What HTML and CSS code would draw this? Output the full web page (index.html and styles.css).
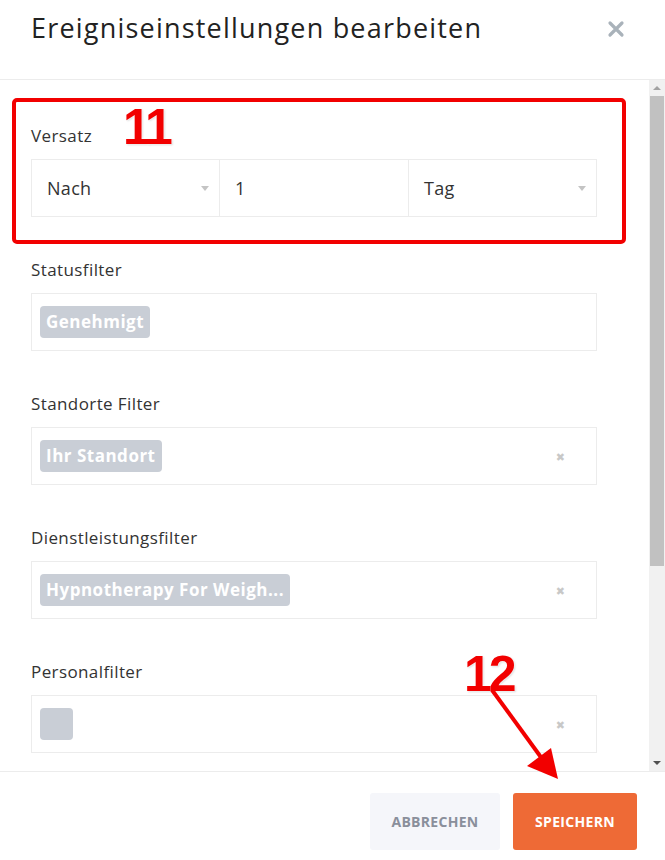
FILE: index.html
```html
<!DOCTYPE html>
<html lang="de">
<head>
    <meta charset="utf-8">
    <title>Ereigniseinstellungen bearbeiten</title>
    <link rel="stylesheet" href="styles.css">
</head>
<body>
    <div class="modal">
        <div class="modal-head">
            <h1 class="modal-title">Ereigniseinstellungen bearbeiten</h1>
            <button class="close-btn" aria-label="Schließen">
                <svg width="18" height="18" viewBox="0 0 18 18"><path d="M3 3 L15 15 M15 3 L3 15" stroke="#a9b2ba" stroke-width="3.2" stroke-linecap="round"/></svg>
            </button>
        </div>

        <div class="modal-main">
            <div class="modal-body">
                <div class="field">
                    <label class="field-label">Versatz</label>
                    <div class="offset-group">
                        <div class="cell cell-select">Nach<span class="caret"></span></div>
                        <div class="cell">1</div>
                        <div class="cell cell-select">Tag<span class="caret"></span></div>
                    </div>
                </div>

                <div class="field">
                    <label class="field-label">Statusfilter</label>
                    <div class="multi">
                        <span class="tag">Genehmigt</span>
                    </div>
                </div>

                <div class="field">
                    <label class="field-label">Standorte Filter</label>
                    <div class="multi">
                        <span class="tag">Ihr Standort</span>
                        <span class="clear">&#10006;</span>
                    </div>
                </div>

                <div class="field">
                    <label class="field-label">Dienstleistungsfilter</label>
                    <div class="multi">
                        <span class="tag">Hypnotherapy For Weigh...</span>
                        <span class="clear">&#10006;</span>
                    </div>
                </div>

                <div class="field">
                    <label class="field-label">Personalfilter</label>
                    <div class="multi">
                        <span class="tag tag-empty"></span>
                        <span class="clear">&#10006;</span>
                    </div>
                </div>
            </div>

            <div class="scrollbar">
                <div class="sb-btn"><span class="sb-up"></span></div>
                <div class="sb-track"><div class="sb-thumb"></div></div>
                <div class="sb-btn"><span class="sb-down"></span></div>
            </div>
        </div>

        <div class="modal-foot">
            <button class="btn btn-cancel">Abbrechen</button>
            <button class="btn btn-save">Speichern</button>
        </div>

        <!-- screenshot annotations -->
        <div class="mark-box"></div>
        <div class="mark-num num-11">11</div>
        <div class="mark-num num-12">12</div>
        <svg class="mark-arrow" width="665" height="860" viewBox="0 0 665 860">
            <line x1="492" y1="690" x2="543" y2="760" stroke="#f20000" stroke-width="4"/>
            <polygon points="527,766 551,748 558,779" fill="#f20000"/>
        </svg>
    </div>
</body>
</html>
```

FILE: styles.css
```css
body {
    margin: 0;
    background: #fff;
    font-family: "Open Sans", "DejaVu Sans", sans-serif;
    color: #333;
}
.modal {
    position: relative;
    height: 860px;
    display: flex;
    flex-direction: column;
    overflow: hidden;
}
.modal-head {
    height: 80px;
    flex: none;
    display: flex;
    align-items: flex-start;
    justify-content: space-between;
    padding: 10px 40px 0 31px;
    box-sizing: border-box;
    border-bottom: 1px solid #ececec;
}
.modal-title {
    margin: 0;
    font-size: 27px;
    line-height: 36px;
    font-weight: 400;
    letter-spacing: 1.2px;
    color: #222;
}
.close-btn {
    border: none;
    background: none;
    padding: 0;
    margin-top: 10px;
    cursor: pointer;
}

.modal-main {
    flex: 1;
    display: flex;
    min-height: 0;
}
.modal-body {
    flex: 1;
    overflow: hidden;
    padding: 45px 52px 0 31px;
}

/* fake classic scrollbar (thumb near top) */
.scrollbar {
    width: 16px;
    flex: none;
    display: flex;
    flex-direction: column;
    background: #f1f1f1;
}
.sb-btn {
    height: 16px;
    display: flex;
    align-items: center;
    justify-content: center;
}
.sb-up {
    border-left: 4px solid transparent;
    border-right: 4px solid transparent;
    border-bottom: 4px solid #a3a3a3;
}
.sb-down {
    border-left: 4px solid transparent;
    border-right: 4px solid transparent;
    border-top: 4px solid #505050;
}
.sb-track {
    flex: 1;
}
.sb-thumb {
    height: 470px;
    margin: 0 1px;
    background: #c1c1c1;
}

.field {
    margin-bottom: 42px;
}
.field-label {
    display: block;
    font-size: 17px;
    line-height: 22px;
    letter-spacing: 0.4px;
    margin-bottom: 12px;
    color: #333;
}
.offset-group {
    display: grid;
    grid-template-columns: 187px 189px 1fr;
    height: 58px;
    border: 1px solid #ececec;
    box-sizing: border-box;
}
.cell {
    display: flex;
    align-items: center;
    padding-left: 15px;
    font-size: 18px;
    letter-spacing: 0.3px;
    color: #333;
    border-left: 1px solid #ececec;
    position: relative;
}
.cell:first-child {
    border-left: none;
}
.caret {
    position: absolute;
    right: 10px;
    top: 26px;
    border-left: 4px solid transparent;
    border-right: 4px solid transparent;
    border-top: 5px solid #c4c4c4;
}
.multi {
    height: 58px;
    border: 1px solid #ececec;
    box-sizing: border-box;
    display: flex;
    align-items: center;
    padding: 0 31px 0 8px;
}
.tag {
    background: #c9ced6;
    color: #fff;
    font-weight: 700;
    font-size: 17px;
    line-height: 32px;
    height: 32px;
    letter-spacing: 0.5px;
    padding: 0 6px;
    border-radius: 4px;
}
.tag-empty {
    width: 33px;
    padding: 0;
}
.clear {
    margin-left: auto;
    color: #c8c8c8;
    font-size: 11px;
}

.modal-foot {
    height: 89px;
    flex: none;
    border-top: 1px solid #ececec;
    display: flex;
    justify-content: flex-end;
    align-items: flex-start;
    gap: 13px;
    padding: 21px 28px 0 0;
    box-sizing: border-box;
}
.btn {
    height: 57px;
    border: none;
    border-radius: 3px;
    font-family: "Open Sans", sans-serif;
    font-weight: 700;
    font-size: 14px;
    letter-spacing: 0.3px;
    text-transform: uppercase;
    cursor: pointer;
}
.btn-cancel {
    width: 130px;
    background: #f5f6fa;
    color: #8a8f9b;
}
.btn-save {
    width: 124px;
    background: #ee6a36;
    color: #fff;
}

/* annotations drawn on top */
.mark-box {
    position: absolute;
    left: 12px;
    top: 98px;
    width: 614px;
    height: 146px;
    box-sizing: border-box;
    border: 4px solid #f20000;
    border-radius: 5px;
}
.mark-num {
    position: absolute;
    font-family: "Liberation Sans", Arial, sans-serif;
    font-weight: 700;
    font-size: 50px;
    line-height: 1;
    letter-spacing: -3px;
    color: #f20000;
    text-shadow: 0 0 2px #fff, 0 0 3px #fff, 1px 1px 2px #ccc;
}
.num-11 {
    left: 123px;
    top: 102px;
}
.num-12 {
    left: 464px;
    top: 649px;
}
.mark-arrow {
    position: absolute;
    left: 0;
    top: 0;
    pointer-events: none;
}
```
